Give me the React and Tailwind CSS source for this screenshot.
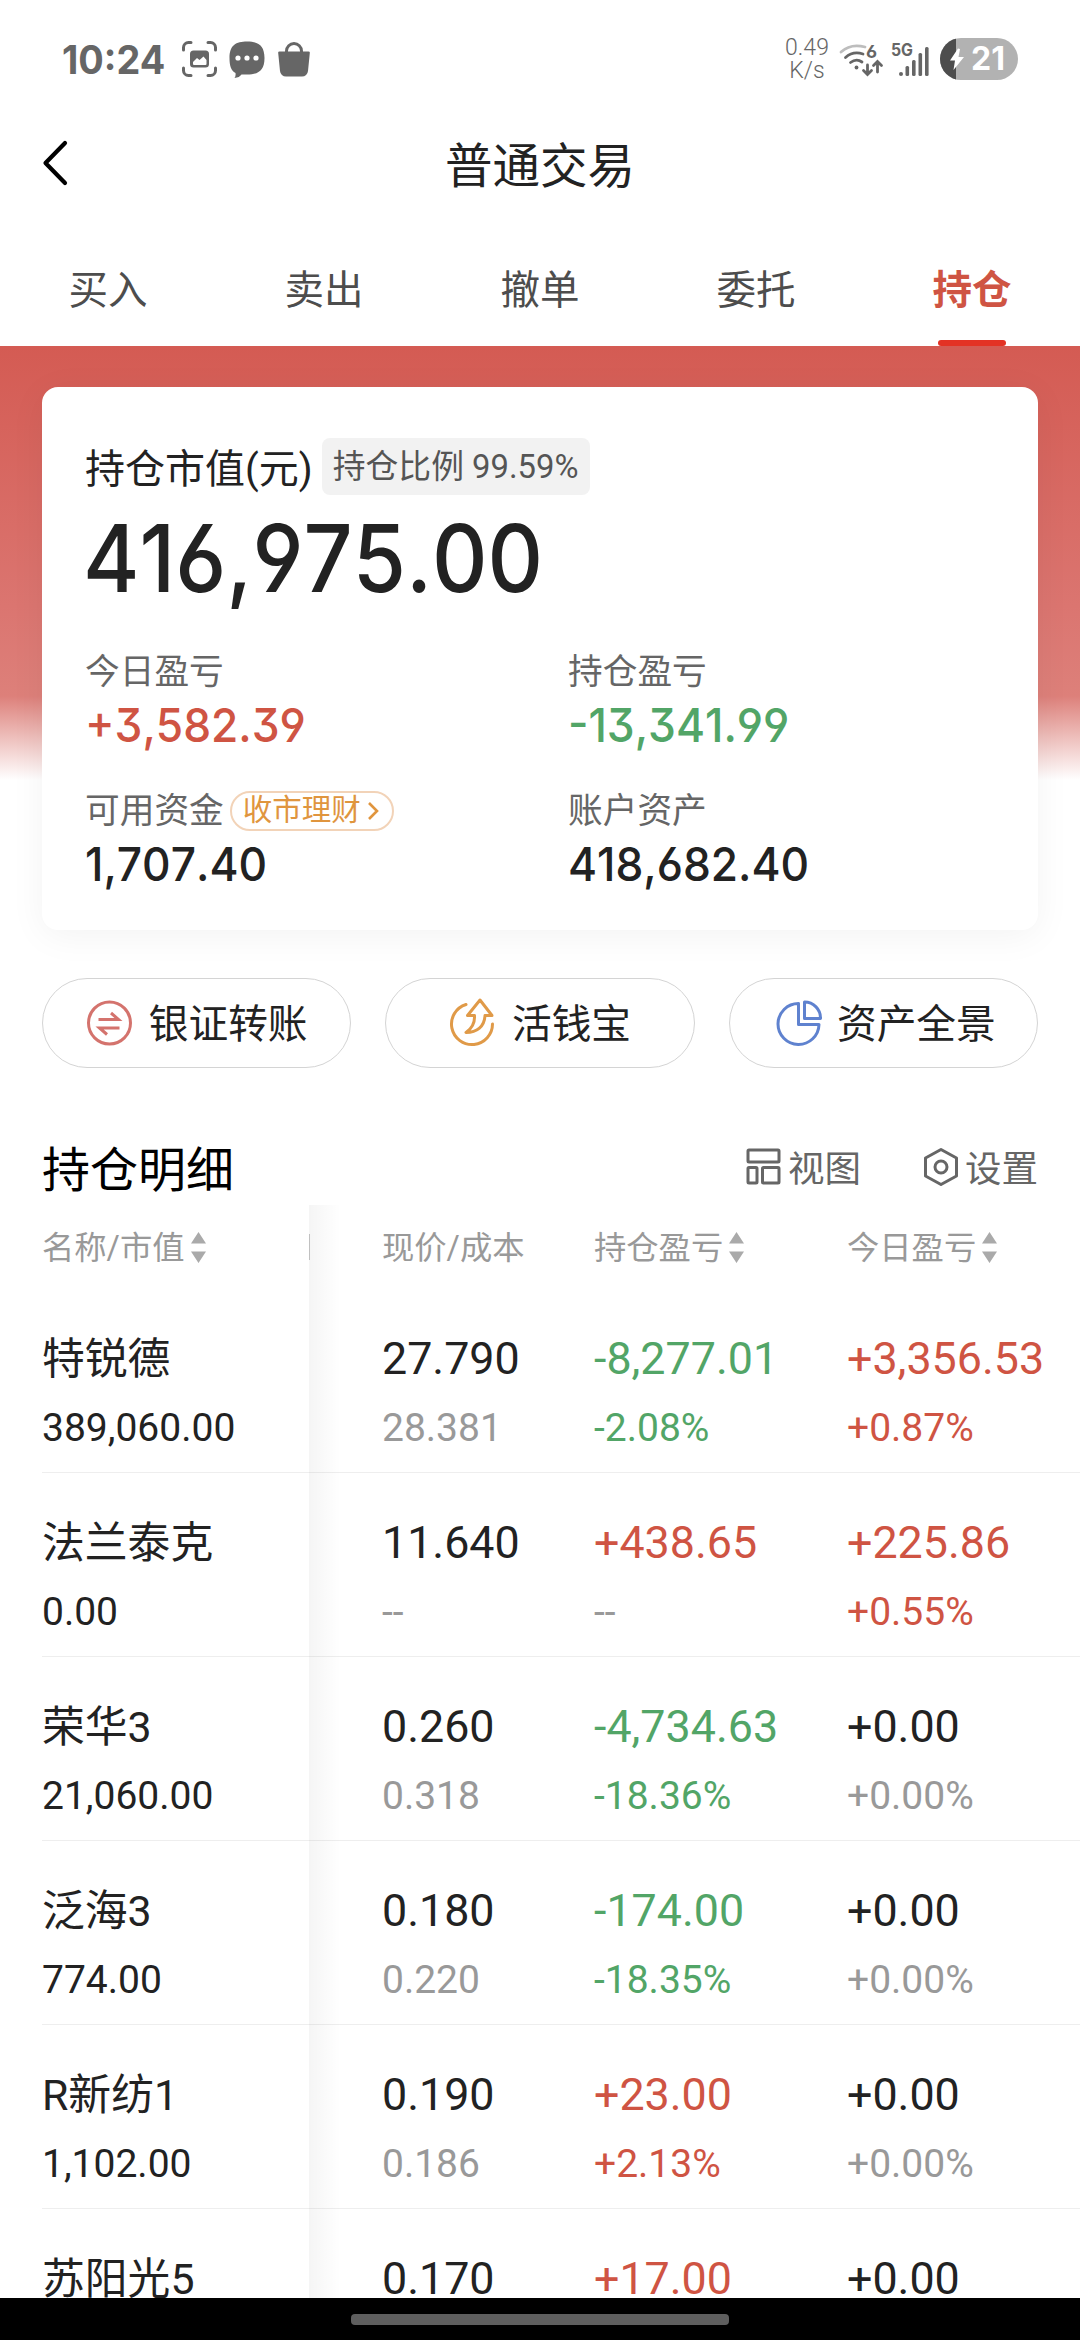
const RED = "text-[#cf5443]";
const GREEN = "text-[#52a567]";
const DARK = "text-[#222222]";
const GRAY = "text-[#999999]";

const NUM = "font-['Inter'] font-medium [font-feature-settings:'cv03','cv04','cv09'] [font-kerning:none] inline-block origin-left";

const tabs = ["买入", "卖出", "撤单", "委托", "持仓"];

const holdings = [
  { name: "特锐德", value: "389,060.00", price: "27.790", cost: "28.381", pl: "-8,277.01", plPct: "-2.08%", plColor: GREEN, day: "+3,356.53", dayPct: "+0.87%", dayColor: RED },
  { name: "法兰泰克", value: "0.00", price: "11.640", cost: "--", pl: "+438.65", plPct: "--", plColor: RED, day: "+225.86", dayPct: "+0.55%", dayColor: RED },
  { name: "荣华3", value: "21,060.00", price: "0.260", cost: "0.318", pl: "-4,734.63", plPct: "-18.36%", plColor: GREEN, day: "+0.00", dayPct: "+0.00%", dayColor: DARK },
  { name: "泛海3", value: "774.00", price: "0.180", cost: "0.220", pl: "-174.00", plPct: "-18.35%", plColor: GREEN, day: "+0.00", dayPct: "+0.00%", dayColor: DARK },
  { name: "R新纺1", value: "1,102.00", price: "0.190", cost: "0.186", pl: "+23.00", plPct: "+2.13%", plColor: RED, day: "+0.00", dayPct: "+0.00%", dayColor: DARK },
  { name: "苏阳光5", price: "0.170", pl: "+17.00", plColor: RED, day: "+0.00", dayColor: DARK },
];

function StatusBar() {
  return (
    <div className="h-[118px] shrink-0 flex items-center pl-[62px] pr-[62px] text-[#666666]">
      <span className="font-['Inter'] font-bold text-[39px] leading-none inline-block w-[120px] whitespace-nowrap">
        <span className="inline-block origin-left scale-x-[0.97]">10:24</span>
      </span>

      {/* notification icons */}
      <svg width="35" height="36" viewBox="0 0 35 36" fill="none" stroke="currentColor" strokeWidth="3" strokeLinecap="round">
        <path d="M1.500 9V6.500a5 5 0 0 1 5-5H9M26 1.500h2.500a5 5 0 0 1 5 5V9M33.500 27v2.500a5 5 0 0 1-5 5H26M9 34.500H6.500a5 5 0 0 1-5-5V27" />
        <rect x="8" y="9.500" width="19" height="17" rx="3.500" fill="currentColor" stroke="none" />
        <path d="M11 23v-2l4-4 2.500 2 4-3.500 3 3.500v4a1 1 0 0 1-1 1H12a1 1 0 0 1-1-1z" fill="#fff" stroke="none" />
      </svg>
      <svg className="ml-[12px]" width="36" height="37" viewBox="0 0 36 37">
        <path d="M18 .5C29 .5 35.500 4 35.500 17S29 33.500 18 33.500h-5.500C11 35.500 9 36.700 5.500 37c1-1.500 1.300-3 1-5C2 29.500.5 25 .5 17 .5 4 7 .5 18 .5z" fill="currentColor" />
        <circle cx="9" cy="17" r="2.600" fill="#fff" />
        <circle cx="18" cy="17" r="2.600" fill="#fff" />
        <circle cx="27" cy="17" r="2.600" fill="#fff" />
      </svg>
      <svg className="ml-[13px]" width="32" height="35" viewBox="0 0 32 35">
        <path d="M8.500 11V9a7.500 7.500 0 0 1 15 0v2" fill="none" stroke="currentColor" strokeWidth="3" />
        <path d="M1.500 9.500h29a1.300 1.300 0 0 1 1.300 1.500l-1.800 18a6 6 0 0 1-6 5.500H8A6 6 0 0 1 2 29L.2 11a1.300 1.300 0 0 1 1.300-1.500z" fill="currentColor" />
      </svg>

      <div className="ml-auto flex items-center">
        <div className="w-[48px] text-center font-['Roboto'] font-light text-[23px] leading-[23px]">
          <div>0.49</div>
          <div>K/s</div>
        </div>

        <svg className="ml-[8px]" width="45" height="36" viewBox="0 0 45 36" fill="none" stroke="currentColor" strokeWidth="2.800" strokeLinecap="round">
          <path d="M2 11C8 5.500 17 3.500 26 6" stroke="#bdbdbd" />
          <path d="M6.500 16.500c5-4.500 11.500-5.500 17.500-3.500M11.500 21.500c4-3 8-3 11.500-.5" />
          <circle cx="17.500" cy="26.500" r="1.900" fill="currentColor" stroke="none" />
          <path d="M28.500 24v9M24.500 29.500l4 4 4-4M38.500 31v-9M34.500 24.500l4-4 4 4" />
          <text x="27" y="16.500" className="font-['Inter'] font-bold text-[18px] [font-feature-settings:'cv03']" fill="currentColor" stroke="none">6</text>
        </svg>

        <svg className="ml-[6px]" width="41" height="36" viewBox="0 0 41 36" fill="currentColor">
          <text x="1" y="15" textLength="22" lengthAdjust="spacingAndGlyphs" className="font-['Inter'] font-bold text-[17px]">5G</text>
          <circle cx="11" cy="33" r="2" />
          <rect x="15.500" y="25" width="3.600" height="10" rx="1.500" />
          <rect x="22" y="19" width="3.600" height="16" rx="1.500" />
          <rect x="28.500" y="12" width="3.600" height="23" rx="1.500" />
          <rect x="35" y="6" width="3.600" height="29" rx="1.500" />
        </svg>

        <div className="relative ml-[9px] w-[78px] h-[42px] rounded-full overflow-hidden bg-[#b2b2b2] flex">
          <div className="w-[16px] h-full bg-[#4d4d4d]" />
          <svg className="absolute left-[9px] top-[10px]" width="16" height="23" viewBox="0 0 16 23" fill="#fff">
            <path d="M9 .5 1 12.500h5L4.500 22 15 9H9.500L11 1z" />
          </svg>
          <span className="absolute left-[31px] top-[5px] font-['Inter'] font-bold text-[32px] leading-[32px] text-white">21</span>
        </div>
      </div>
    </div>
  );
}

function Header() {
  return (
    <div className="h-[98px] shrink-0 grid grid-cols-[120px_1fr_120px] items-center">
      <svg className="ml-[42px] mb-[9px]" width="27" height="46" viewBox="0 0 27 46" fill="none" stroke="#000" strokeWidth="4.200" strokeLinecap="round" strokeLinejoin="round">
        <path d="M23 3 3.500 23 23 43" />
      </svg>
      <h1 className="pt-[2px] text-center text-[47.500px] leading-none text-[#222222]">普通交易</h1>
    </div>
  );
}

function Tabs() {
  return (
    <div className="h-[130px] shrink-0 grid grid-cols-5">
      {tabs.map((t) => {
        const active = t === "持仓";
        return (
          <div key={t} className="flex flex-col items-center">
            <span className={`mt-[45px] h-[60px] leading-[60px] text-[39.500px] ${active ? "font-bold text-[#cf5443]" : "text-[#4d4d4d]"}`}>{t}</span>
            {active && <div className="mt-auto w-[68px] h-[6px] rounded-full bg-[#e33224]" />}
          </div>
        );
      })}
    </div>
  );
}

function Stat({ label, value, color, badge }) {
  return (
    <div className="h-[139px]">
      <div className="flex items-center h-[50px] text-[34.700px] text-[#666666]">
        <span className="pt-[5px]">{label}</span>
        {badge && (
          <span className="ml-[6px] mt-[3px] w-[164px] h-[40px] rounded-full border-2 border-[#f2d3b8] flex items-center pl-[11px] text-[29.500px] leading-none text-[#e0953e]">
            {badge}
            <svg className="ml-[6px]" width="14" height="20" viewBox="0 0 14 20" fill="none" stroke="currentColor" strokeWidth="2.600">
              <path d="M2 2l8 8-8 8" />
            </svg>
          </span>
        )}
      </div>
      <div className={`h-[60px] leading-[60px] text-[47px] ${color}`}>
        <span className={`${NUM} scale-x-[0.942]`}>{value}</span>
      </div>
    </div>
  );
}

function SummaryCard() {
  return (
    <div className="h-[543px] rounded-[16px] bg-white px-[43px] pt-[51px] shadow-[0_6px_36px_rgba(0,0,0,0.05)]">
      <div className="flex items-center h-[57px]">
        <span className="pt-[6px] text-[40px] text-[#222222]">持仓市值(元)</span>
        <span className="ml-[9px] w-[268px] h-[57px] rounded-[8px] bg-[#f2f2f2] flex items-center justify-center pt-[2px] text-[32.800px] whitespace-pre text-[#555555]">
          持仓比例 99.59%
        </span>
      </div>
      <div className="-ml-[2px] h-[126px] leading-[126px] text-[93px] text-[#222222] whitespace-nowrap">
        <span className={`${NUM} scale-x-[0.926]`}>416,975.00</span>
      </div>
      <div className="mt-[24px] grid grid-cols-[483px_1fr]">
        <Stat label="今日盈亏" value="+3,582.39" color={RED} />
        <Stat label="持仓盈亏" value="-13,341.99" color={GREEN} />
        <Stat label="可用资金" value="1,707.40" color={DARK} badge="收市理财" />
        <Stat label="账户资产" value="418,682.40" color={DARK} />
      </div>
    </div>
  );
}

function TransferIcon() {
  return (
    <svg width="46" height="50" viewBox="0 0 46 50" fill="none" stroke="#d4736d" strokeWidth="3">
      <circle cx="23.500" cy="25" r="21" />
      <path d="M12.500 21.500h20l-7.500-6.500M33.500 30H13.500l7.500 6.500" />
    </svg>
  );
}

function CashIcon() {
  return (
    <svg width="46" height="50" viewBox="0 0 46 50" fill="none" stroke="#e09a48" strokeWidth="3" strokeLinejoin="round" strokeLinecap="round">
      <path d="M17 6.500A20.500 20.500 0 1 0 43.500 26" />
      <path d="M31 2 18.500 17.500h7C26 25 23 30.500 17 34.500c11 0 18.500-6 19-17h7z" />
    </svg>
  );
}

function PieIcon() {
  return (
    <svg width="49" height="50" viewBox="-5 0 49 50" fill="none" stroke="#5f82cf" strokeWidth="3" strokeLinejoin="round" overflow="visible">
      <path d="M22.500 5.500V26.500H43A20.500 20.500 0 1 1 22.500 5.500z" />
      <path d="M28.500 4V20.500H44.500A16 16 0 0 0 28.500 4z" />
    </svg>
  );
}

function Shortcut({ icon, children }) {
  return (
    <div className="h-[90px] rounded-full border border-[#d4d4d4] bg-white flex items-center justify-center text-[39.700px] text-[#222222]">
      {icon}
      <span className="ml-[17px] pt-[4px]">{children}</span>
    </div>
  );
}

function Sorter() {
  return (
    <svg className="ml-[6px]" width="15" height="31" viewBox="0 0 15 31" fill="#aaaaaa">
      <path d="M7.500 0 15 11.500H0zM7.500 31 15 19.500H0z" />
    </svg>
  );
}

function SectionTitle() {
  return (
    <div className="h-[73px] mt-[64px] pl-[42px] pr-[42px] flex items-center">
      <h2 className="pt-[4px] text-[48px] text-black">持仓明细</h2>
      <div className="ml-auto flex items-center text-[36.500px] text-[#666666]">
        <svg className="mb-[3px]" width="36" height="38" viewBox="0 0 36 38" fill="none" stroke="currentColor" strokeWidth="3">
          <rect x="2" y="2" width="31" height="12" rx="1" />
          <rect x="2" y="19.500" width="9" height="15.500" rx="1" />
          <rect x="16.500" y="19.500" width="16.500" height="15.500" rx="1" />
        </svg>
        <span className="ml-[6px] pt-[3px]">视图</span>
        <svg className="ml-[62px] mb-[4px]" width="36" height="40" viewBox="0 0 36 40" fill="none" stroke="currentColor" strokeWidth="3">
          <path d="M18 2.500 33.500 11v18L18 37.500 2.500 29V11z" strokeLinejoin="round" />
          <circle cx="18" cy="20" r="6" />
        </svg>
        <span className="ml-[6px] pt-[3px]">设置</span>
      </div>
    </div>
  );
}

function Cell({ top, bottom, topColor, bottomColor, cls }) {
  return (
    <div className={`flex flex-col pt-[51px] whitespace-nowrap ${cls}`}>
      <span className={`h-[38px] leading-[38px] ${topColor}`}>{top}</span>
      {bottom && <span className={`mt-[22px] h-[56px] leading-[56px] text-[39px] ${bottomColor}`}>{bottom}</span>}
    </div>
  );
}

const cols = "grid grid-cols-[267px_73px_212px_253px_233px]";

function HoldingsTable() {
  return (
    <div className="relative flex-1 min-h-0 overflow-hidden pl-[42px]">
      <div className={`${cols} h-[84px] items-center text-[32.300px] text-[#999999] whitespace-nowrap`}>
        <div className="flex items-center"><span className="pt-[3px]">名称/市值</span><Sorter /></div>
        <div className="w-px h-[26px] bg-[#c8c8c8]" />
        <div className="pt-[3px]">现价/成本</div>
        <div className="flex items-center"><span className="pt-[3px]">持仓盈亏</span><Sorter /></div>
        <div className="flex items-center"><span className="pt-[3px]">今日盈亏</span><Sorter /></div>
      </div>
      {holdings.map((h) => (
        <div key={h.name} className={`${cols} h-[184px] border-b border-[#eeeeee]`}>
          <Cell top={h.name} bottom={h.value} topColor={DARK} bottomColor={DARK} cls="text-[42.800px]" />
          <div />
          <Cell top={h.price} bottom={h.cost} topColor={DARK} bottomColor={GRAY} cls="text-[44.800px]" />
          <Cell top={h.pl} bottom={h.plPct} topColor={h.plColor} bottomColor={h.plPct === "--" ? GRAY : h.plColor} cls="text-[44.800px]" />
          <Cell top={h.day} bottom={h.dayPct} topColor={h.dayColor} bottomColor={h.dayColor === DARK ? GRAY : h.dayColor} cls="text-[44.800px]" />
        </div>
      ))}
      {/* edge shadow of the pinned first column */}
      <div className="absolute left-[309px] top-0 bottom-0 w-[32px] bg-gradient-to-r from-black/4 to-transparent" />
    </div>
  );
}

export default function App() {
  return (
    <div className="w-[1080px] h-[2340px] overflow-hidden bg-white flex flex-col font-['Roboto','Noto_Sans_CJK_SC',sans-serif]">
      <StatusBar />
      <Header />
      <Tabs />

      <div className="h-[632px] shrink-0 px-[42px] pt-[41px] bg-[linear-gradient(to_bottom,#d45b53_0px,#db7570_260px,#dd807a_350px,#ffffff_434px)]">
        <SummaryCard />
      </div>

      <div className="px-[42px] grid grid-cols-3 gap-[34px]">
        <Shortcut icon={<TransferIcon />}>银证转账</Shortcut>
        <Shortcut icon={<CashIcon />}>活钱宝</Shortcut>
        <Shortcut icon={<PieIcon />}>资产全景</Shortcut>
      </div>

      <SectionTitle />
      <HoldingsTable />

      <div className="h-[42px] shrink-0 bg-black flex items-center justify-center">
        <div className="w-[378px] h-[11px] rounded-[4px] bg-[#5e5e5e]" />
      </div>
    </div>
  );
}
